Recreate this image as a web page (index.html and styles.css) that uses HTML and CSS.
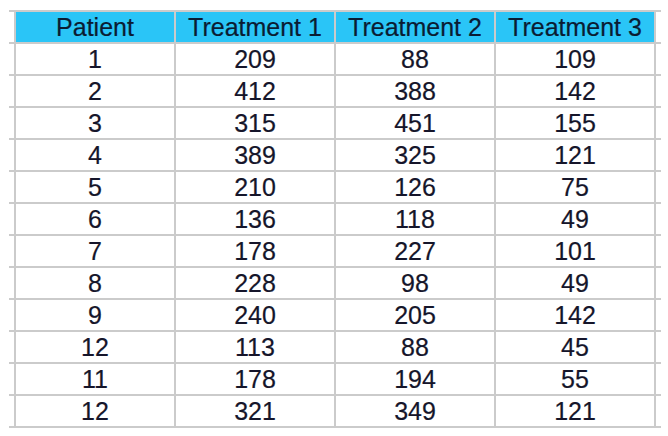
FILE: index.html
```html
<!DOCTYPE html>
<html>
<head>
<meta charset="utf-8">
<link rel="stylesheet" href="styles.css">
</head>
<body>
<div class="sheet">
  <div class="pad"></div><div class="cell head">Patient</div><div class="cell head">Treatment 1</div><div class="cell head">Treatment 2</div><div class="cell head">Treatment 3</div><div class="pad"></div>
  <div class="pad"></div><div class="cell">1</div><div class="cell">209</div><div class="cell">88</div><div class="cell">109</div><div class="pad"></div>
  <div class="pad"></div><div class="cell">2</div><div class="cell">412</div><div class="cell">388</div><div class="cell">142</div><div class="pad"></div>
  <div class="pad"></div><div class="cell">3</div><div class="cell">315</div><div class="cell">451</div><div class="cell">155</div><div class="pad"></div>
  <div class="pad"></div><div class="cell">4</div><div class="cell">389</div><div class="cell">325</div><div class="cell">121</div><div class="pad"></div>
  <div class="pad"></div><div class="cell">5</div><div class="cell">210</div><div class="cell">126</div><div class="cell">75</div><div class="pad"></div>
  <div class="pad"></div><div class="cell">6</div><div class="cell">136</div><div class="cell">118</div><div class="cell">49</div><div class="pad"></div>
  <div class="pad"></div><div class="cell">7</div><div class="cell">178</div><div class="cell">227</div><div class="cell">101</div><div class="pad"></div>
  <div class="pad"></div><div class="cell">8</div><div class="cell">228</div><div class="cell">98</div><div class="cell">49</div><div class="pad"></div>
  <div class="pad"></div><div class="cell">9</div><div class="cell">240</div><div class="cell">205</div><div class="cell">142</div><div class="pad"></div>
  <div class="pad"></div><div class="cell">12</div><div class="cell">113</div><div class="cell">88</div><div class="cell">45</div><div class="pad"></div>
  <div class="pad"></div><div class="cell">11</div><div class="cell">178</div><div class="cell">194</div><div class="cell">55</div><div class="pad"></div>
  <div class="pad"></div><div class="cell">12</div><div class="cell">321</div><div class="cell">349</div><div class="cell">121</div><div class="pad"></div>
</div>
</body>
</html>
```
FILE: styles.css
```css
html, body {
  margin: 0;
  padding: 0;
  background: #ffffff;
}
body {
  padding: 10px 0 0 9px;
}
.sheet {
  display: inline-grid;
  grid-template-columns: 5px repeat(4, 158px) 5px;
  grid-auto-rows: 30px;
  gap: 2px;
  padding: 2px 0;
  background: #cbcbcb;
  font-family: "Liberation Sans", Arial, sans-serif;
  font-size: 25px;
  color: #15152a;
}
.pad {
  background: #ffffff;
}
.cell {
  background: #ffffff;
  display: flex;
  align-items: center;
  justify-content: center;
  line-height: 30px;
  white-space: nowrap;
  -webkit-text-stroke: 0.2px currentColor;
}
.head {
  background: #2ac5f7;
  color: #0a1c33;
}
```
